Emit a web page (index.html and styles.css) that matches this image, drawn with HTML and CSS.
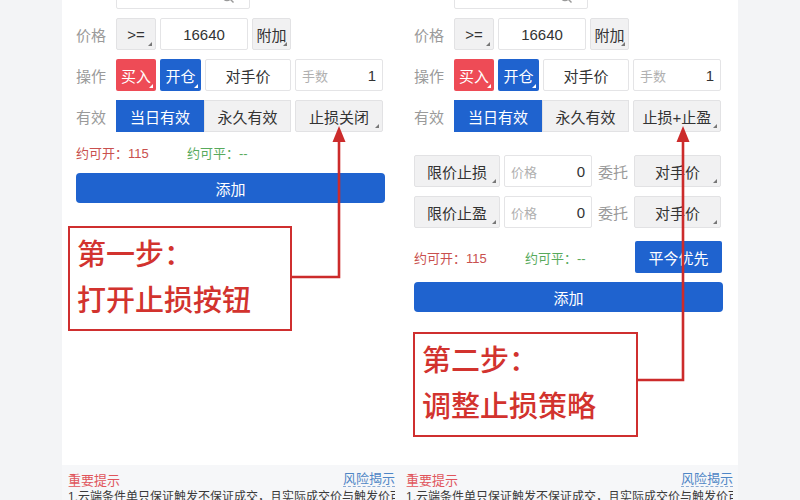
FILE: index.html
```html
<!DOCTYPE html>
<html lang="zh-CN">
<head>
<meta charset="utf-8">
<title>条件单 止损设置</title>
<link rel="stylesheet" href="styles.css">
</head>
<body>
<div class="stage">
  <div class="side"></div>

  <section class="panel">
    <div class="form">
      <div class="row row-top">
        <span class="label"></span>
        <div class="inp inp-search">
          <svg class="search" width="14" height="14" viewBox="0 0 14 14"><circle cx="6" cy="6" r="4.5" fill="none" stroke="#999" stroke-width="1.4"/><path d="M9.3 9.3 L12.5 12.5" stroke="#999" stroke-width="1.4"/></svg>
        </div>
        <span class="hint">螺纹钢主力</span>
      </div>
      <div class="row">
        <span class="label">价格</span>
        <div class="btn gray w40 drop">&gt;=</div>
        <div class="inp w88 center">16640</div>
        <div class="btn gray w39 drop">附加</div>
      </div>
      <div class="row">
        <span class="label">操作</span>
        <div class="btn red w40 drop light">买入</div>
        <div class="btn blue w41 drop light">开仓</div>
        <div class="inp w86 center">对手价</div>
        <div class="inp w88 split"><span class="ph">手数</span><span>1</span></div>
      </div>
      <div class="row">
        <span class="label">有效</span>
        <div class="seg">
          <div class="btn blue w88">当日有效</div>
          <div class="btn gray w87">永久有效</div>
        </div>
        <div class="btn gray w88 drop">止损关闭</div>
      </div>
      <div class="stats">
        <span class="open">约可开：115</span>
        <span class="close">约可平：--</span>
      </div>
      <div class="add">添加</div>
      <div class="callout callout-left">
        <p>第一步：</p>
        <p>打开止损按钮</p>
      </div>
    </div>
    <div class="notes">
      <div class="notes-head"><span class="warn">重要提示</span><span class="risk">风险揭示</span></div>
      <p class="notes-text">1.云端条件单只保证触发不保证成交，且实际成交价与触发价可</p>
    </div>
  </section>

  <section class="panel">
    <div class="form">
      <div class="row row-top">
        <span class="label"></span>
        <div class="inp inp-search">
          <svg class="search" width="14" height="14" viewBox="0 0 14 14"><circle cx="6" cy="6" r="4.5" fill="none" stroke="#999" stroke-width="1.4"/><path d="M9.3 9.3 L12.5 12.5" stroke="#999" stroke-width="1.4"/></svg>
        </div>
        <span class="hint">螺纹钢主力</span>
      </div>
      <div class="row">
        <span class="label">价格</span>
        <div class="btn gray w40 drop">&gt;=</div>
        <div class="inp w88 center">16640</div>
        <div class="btn gray w39 drop">附加</div>
      </div>
      <div class="row">
        <span class="label">操作</span>
        <div class="btn red w40 drop light">买入</div>
        <div class="btn blue w41 drop light">开仓</div>
        <div class="inp w86 center">对手价</div>
        <div class="inp w88 split"><span class="ph">手数</span><span>1</span></div>
      </div>
      <div class="row">
        <span class="label">有效</span>
        <div class="seg">
          <div class="btn blue w88">当日有效</div>
          <div class="btn gray w87">永久有效</div>
        </div>
        <div class="btn gray w88 drop">止损+止盈</div>
      </div>
      <div class="row row-stop">
        <div class="btn gray w86 drop">限价止损</div>
        <div class="inp w88 split"><span class="ph">价格</span><span>0</span></div>
        <span class="mid-label">委托</span>
        <div class="btn gray w87 drop">对手价</div>
      </div>
      <div class="row">
        <div class="btn gray w86 drop">限价止盈</div>
        <div class="inp w88 split"><span class="ph">价格</span><span>0</span></div>
        <span class="mid-label">委托</span>
        <div class="btn gray w87 drop">对手价</div>
      </div>
      <div class="row row-stats">
        <span class="open">约可开：115</span>
        <span class="close">约可平：--</span>
        <div class="btn blue w87 push">平今优先</div>
      </div>
      <div class="add add-right">添加</div>
      <div class="callout callout-right">
        <p>第二步：</p>
        <p>调整止损策略</p>
      </div>
    </div>
    <div class="notes">
      <div class="notes-head"><span class="warn">重要提示</span><span class="risk">风险揭示</span></div>
      <p class="notes-text">1.云端条件单只保证触发不保证成交，且实际成交价与触发价可</p>
    </div>
  </section>

  <div class="side"></div>

  <svg class="arrows" width="800" height="500" viewBox="0 0 800 500">
    <polyline points="292,277 339,277 339,140" fill="none" stroke="#cc2b2b" stroke-width="2.6"/>
    <polygon points="339,126 332.5,142 345.5,142" fill="#cc2b2b"/>
    <polyline points="637,380 683,380 683,140" fill="none" stroke="#cc2b2b" stroke-width="2.6"/>
    <polygon points="683,126 676.5,142 689.5,142" fill="#cc2b2b"/>
  </svg>
</div>
</body>
</html>
```

FILE: styles.css
```css
* { box-sizing: border-box; }

body {
  margin: 0;
  font-family: "Liberation Sans", "Noto Sans CJK SC", sans-serif;
  color: #333;
}

.stage {
  position: relative;
  display: flex;
  width: 800px;
  height: 500px;
  overflow: hidden;
  background: #f3f4f6;
}

.side {
  width: 62px;
  flex: none;
}

.panel {
  width: 338px;
  flex: none;
  display: flex;
  flex-direction: column;
}

.form {
  height: 465px;
  flex: none;
  background: #fff;
  padding: 0 15px 0 14px;
  display: flex;
  flex-direction: column;
}

.row {
  display: flex;
  align-items: center;
  height: 32px;
  gap: 4px;
  margin-bottom: 9px;
  flex: none;
}

.row-top {
  margin-top: -23px;
}

.label {
  width: 36px;
  flex: none;
  font-size: 15px;
  color: #9a9a9a;
}

.btn,
.inp {
  position: relative;
  height: 32px;
  flex: none;
  display: flex;
  align-items: center;
  justify-content: center;
  font-size: 15px;
  border-radius: 2px;
  white-space: nowrap;
}

.gray {
  background: #f1f1f2;
  border: 1px solid #e2e2e4;
  color: #333;
}

.blue {
  background: #1f63cf;
  color: #fff;
}

.red {
  background: #ee4b56;
  color: #fff;
}

.inp {
  background: #fff;
  border: 1px solid #e4e4e6;
  color: #333;
}

.center { justify-content: center; }

.split {
  justify-content: space-between;
  padding: 0 6px;
}

.ph {
  font-size: 13px;
  color: #b0b0b0;
}

.drop::after {
  content: "";
  position: absolute;
  right: 3px;
  bottom: 3px;
  width: 0;
  height: 0;
  border-left: 4px solid transparent;
  border-bottom: 4px solid #777;
}

.drop.light::after {
  border-bottom-color: #fff;
}

.w39 { width: 39px; }
.w40 { width: 40px; }
.w41 { width: 41px; }
.w86 { width: 86px; }
.w87 { width: 87px; }
.w88 { width: 88px; }

.seg {
  display: flex;
  flex: none;
}

.seg .btn { border-radius: 0; }

.inp-search {
  width: 134px;
  justify-content: flex-end;
  padding-right: 14px;
  align-items: flex-end;
}

.search {
  margin-bottom: 4px;
}

.hint {
  margin-left: 4px;
  font-size: 15px;
  color: #bbb;
  align-self: flex-start;
  margin-top: -8px;
}

.stats {
  display: flex;
  height: 16px;
  align-items: center;
  margin-top: 3px;
  flex: none;
}

.open { color: #c9504e; width: 111px; font-size: 13px; }
.close { color: #58aa5c; font-size: 13px; }

.add {
  height: 30px;
  flex: none;
  margin-top: 13px;
  background: #1f63cf;
  color: #fff;
  font-size: 15px;
  border-radius: 4px;
  display: flex;
  align-items: center;
  justify-content: center;
}

.add-right {
  margin-top: 0;
}

.row-stop {
  margin-top: 14px;
}

.mid-label {
  width: 34px;
  flex: none;
  padding-left: 2px;
  font-size: 15px;
  color: #9a9a9a;
}

.row-stats {
  margin-top: 4px;
  gap: 0;
}

.push { margin-left: auto; margin-right: 1px; }

.callout {
  flex: none;
  width: 224px;
  height: 105px;
  border: 2.5px solid #cf2f2f;
  padding: 1px 0 0 7px;
  color: #d2332e;
  font-family: "Noto Sans CJK SC", sans-serif;
  font-size: 29px;
  font-weight: 500;
}

.callout p {
  margin: 0;
  line-height: 46px;
  white-space: nowrap;
}

.callout-left {
  margin-top: 23px;
  margin-left: -8px;
}

.callout-right {
  margin-top: 20px;
  margin-left: -1px;
  width: 225px;
}

.notes {
  flex: 1;
  background: #f6f7f9;
  padding: 5px 5px 0 6px;
  overflow: hidden;
}

.notes-head {
  display: flex;
  justify-content: space-between;
  height: 18px;
  align-items: center;
  font-size: 13px;
}

.warn { color: #e0555c; }

.risk {
  color: #4f86c6;
  border-bottom: 1px dashed #8aaad4;
  line-height: 15px;
}

.notes-text {
  margin: 0;
  font-size: 12px;
  line-height: 18px;
  color: #3a3a3a;
  white-space: nowrap;
  overflow: hidden;
}

.arrows {
  position: absolute;
  left: 0;
  top: 0;
  pointer-events: none;
}
```
